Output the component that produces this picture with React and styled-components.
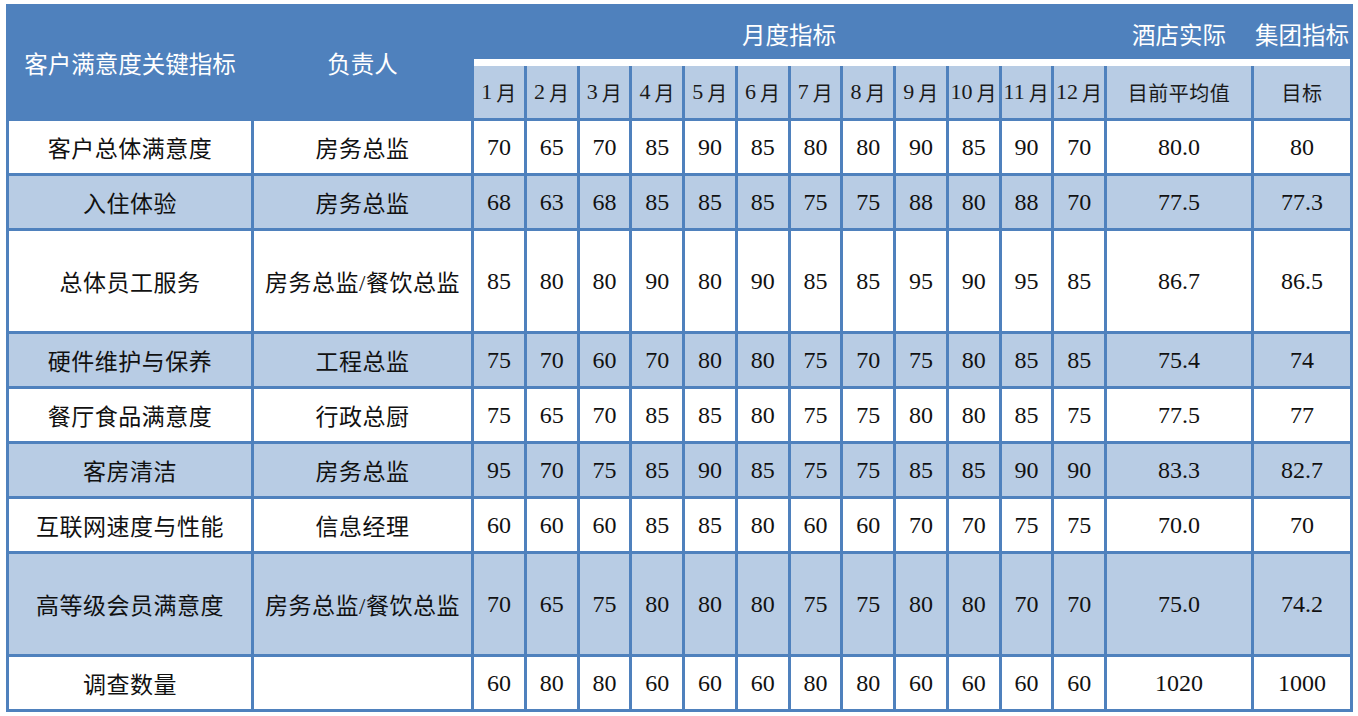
import React from 'react';
import styled, { createGlobalStyle } from 'styled-components';

const BLUE = '#4f81bd';
const LIGHT = '#b8cce4';
const MONTH_W = '49.75px';
const COLS = `242px 217px repeat(12, ${MONTH_W}) 144px 96px`;
const RIGHT_COLS = `repeat(12, ${MONTH_W}) 144px 96px`;
const SERIF = `"Liberation Serif", "Times New Roman", Tinos, Times`;
const CJK = `"Noto Sans CJK SC"`;

const rows = [
  ['客户总体满意度', '房务总监', [70, 65, 70, 85, 90, 85, 80, 80, 90, 85, 90, 70], '80.0', '80', 52],
  ['入住体验', '房务总监', [68, 63, 68, 85, 85, 85, 75, 75, 88, 80, 88, 70], '77.5', '77.3', 52],
  ['总体员工服务', '房务总监/餐饮总监', [85, 80, 80, 90, 80, 90, 85, 85, 95, 90, 95, 85], '86.7', '86.5', 100],
  ['硬件维护与保养', '工程总监', [75, 70, 60, 70, 80, 80, 75, 70, 75, 80, 85, 85], '75.4', '74', 52],
  ['餐厅食品满意度', '行政总厨', [75, 65, 70, 85, 85, 80, 75, 75, 80, 80, 85, 75], '77.5', '77', 52],
  ['客房清洁', '房务总监', [95, 70, 75, 85, 90, 85, 75, 75, 85, 85, 90, 90], '83.3', '82.7', 52],
  ['互联网速度与性能', '信息经理', [60, 60, 60, 85, 85, 80, 60, 60, 70, 70, 75, 75], '70.0', '70', 52],
  ['高等级会员满意度', '房务总监/餐饮总监', [70, 65, 75, 80, 80, 80, 75, 75, 80, 80, 70, 70], '75.0', '74.2', 100],
  ['调查数量', '', [60, 80, 80, 60, 60, 60, 80, 80, 60, 60, 60, 60], '1020', '1000', 52],
];

const months = Array.from({ length: 12 }, (_, i) => i + 1);

const Global = createGlobalStyle`
  html, body { margin: 0; padding: 0; background: #fff; }
  body { font-family: ${SERIF}, ${CJK}, serif; }
`;

const Page = styled.div`
  padding: 4px 0 0 6px;
`;

const Table = styled.div`
  display: grid;
  grid-template-columns: ${COLS};
  grid-template-rows: ${(p) => p.$rows};
  gap: 3px;
  background: ${BLUE};
  padding: 0 3px 3px;
  width: max-content;
`;

const HeadCell = styled.div`
  background: ${BLUE};
  color: #fff;
  font-family: ${CJK}, sans-serif;
  font-size: 23.5px;
  display: flex;
  align-items: center;
  justify-content: center;
  padding-top: 3px;
  white-space: nowrap;
`;

const HeadRight = styled.div`
  grid-column: 3 / -1;
  display: flex;
  flex-direction: column;
  background: ${BLUE};
`;

const TopBand = styled.div`
  display: grid;
  grid-template-columns: 630px 144px 96px;
  column-gap: 3px;
  height: 55px;
`;

const TopLabel = styled.div`
  color: #fff;
  font-family: ${CJK}, sans-serif;
  font-size: 23.5px;
  display: flex;
  align-items: center;
  justify-content: center;
  white-space: nowrap;
  padding-top: 4px;
`;

const WhiteBand = styled.div`
  height: 7px;
  background: #fff;
`;

const SubHead = styled.div`
  display: grid;
  grid-template-columns: ${RIGHT_COLS};
  gap: 3px;
  height: 52px;
  background: ${BLUE};
`;

const SubCell = styled.div`
  background: ${LIGHT};
  color: #1a1a1a;
  font-family: ${CJK}, serif;
  font-size: 20px;
  letter-spacing: 0.5px;
  display: flex;
  align-items: center;
  justify-content: center;
  gap: 4px;
  white-space: nowrap;
`;

const Digit = styled.span`
  font-family: ${SERIF}, serif;
  font-size: 22px;
  letter-spacing: 0;
`;

const Cell = styled.div`
  background: ${(p) => (p.$alt ? LIGHT : '#fff')};
  color: #111;
  font-family: ${(p) => (p.$num ? `${SERIF}, serif` : `${SERIF}, ${CJK}, serif`)};
  font-size: ${(p) => (p.$num ? '24px' : '23px')};
  letter-spacing: ${(p) => (p.$num ? '0' : '0.5px')};
  display: flex;
  align-items: center;
  justify-content: center;
  white-space: nowrap;
`;

export default function App() {
  const rowTemplate = ['114px', ...rows.map((r) => `${r[5]}px`)].join(' ');
  return (
    <>
      <Global />
      <Page>
        <Table $rows={rowTemplate}>
          <HeadCell>客户满意度关键指标</HeadCell>
          <HeadCell>负责人</HeadCell>
          <HeadRight>
            <TopBand>
              <TopLabel>月度指标</TopLabel>
              <TopLabel>酒店实际</TopLabel>
              <TopLabel>集团指标</TopLabel>
            </TopBand>
            <WhiteBand />
            <SubHead>
              {months.map((m) => (
                <SubCell key={m}>
                  <Digit>{m}</Digit>月
                </SubCell>
              ))}
              <SubCell>目前平均值</SubCell>
              <SubCell>目标</SubCell>
            </SubHead>
          </HeadRight>
          {rows.map((r, i) => {
            const alt = i % 2 === 1;
            return (
              <React.Fragment key={r[0]}>
                <Cell $alt={alt}>{r[0]}</Cell>
                <Cell $alt={alt}>{r[1]}</Cell>
                {r[2].map((v, j) => (
                  <Cell $alt={alt} $num key={j}>
                    {v}
                  </Cell>
                ))}
                <Cell $alt={alt} $num>
                  {r[3]}
                </Cell>
                <Cell $alt={alt} $num>
                  {r[4]}
                </Cell>
              </React.Fragment>
            );
          })}
        </Table>
      </Page>
    </>
  );
}
